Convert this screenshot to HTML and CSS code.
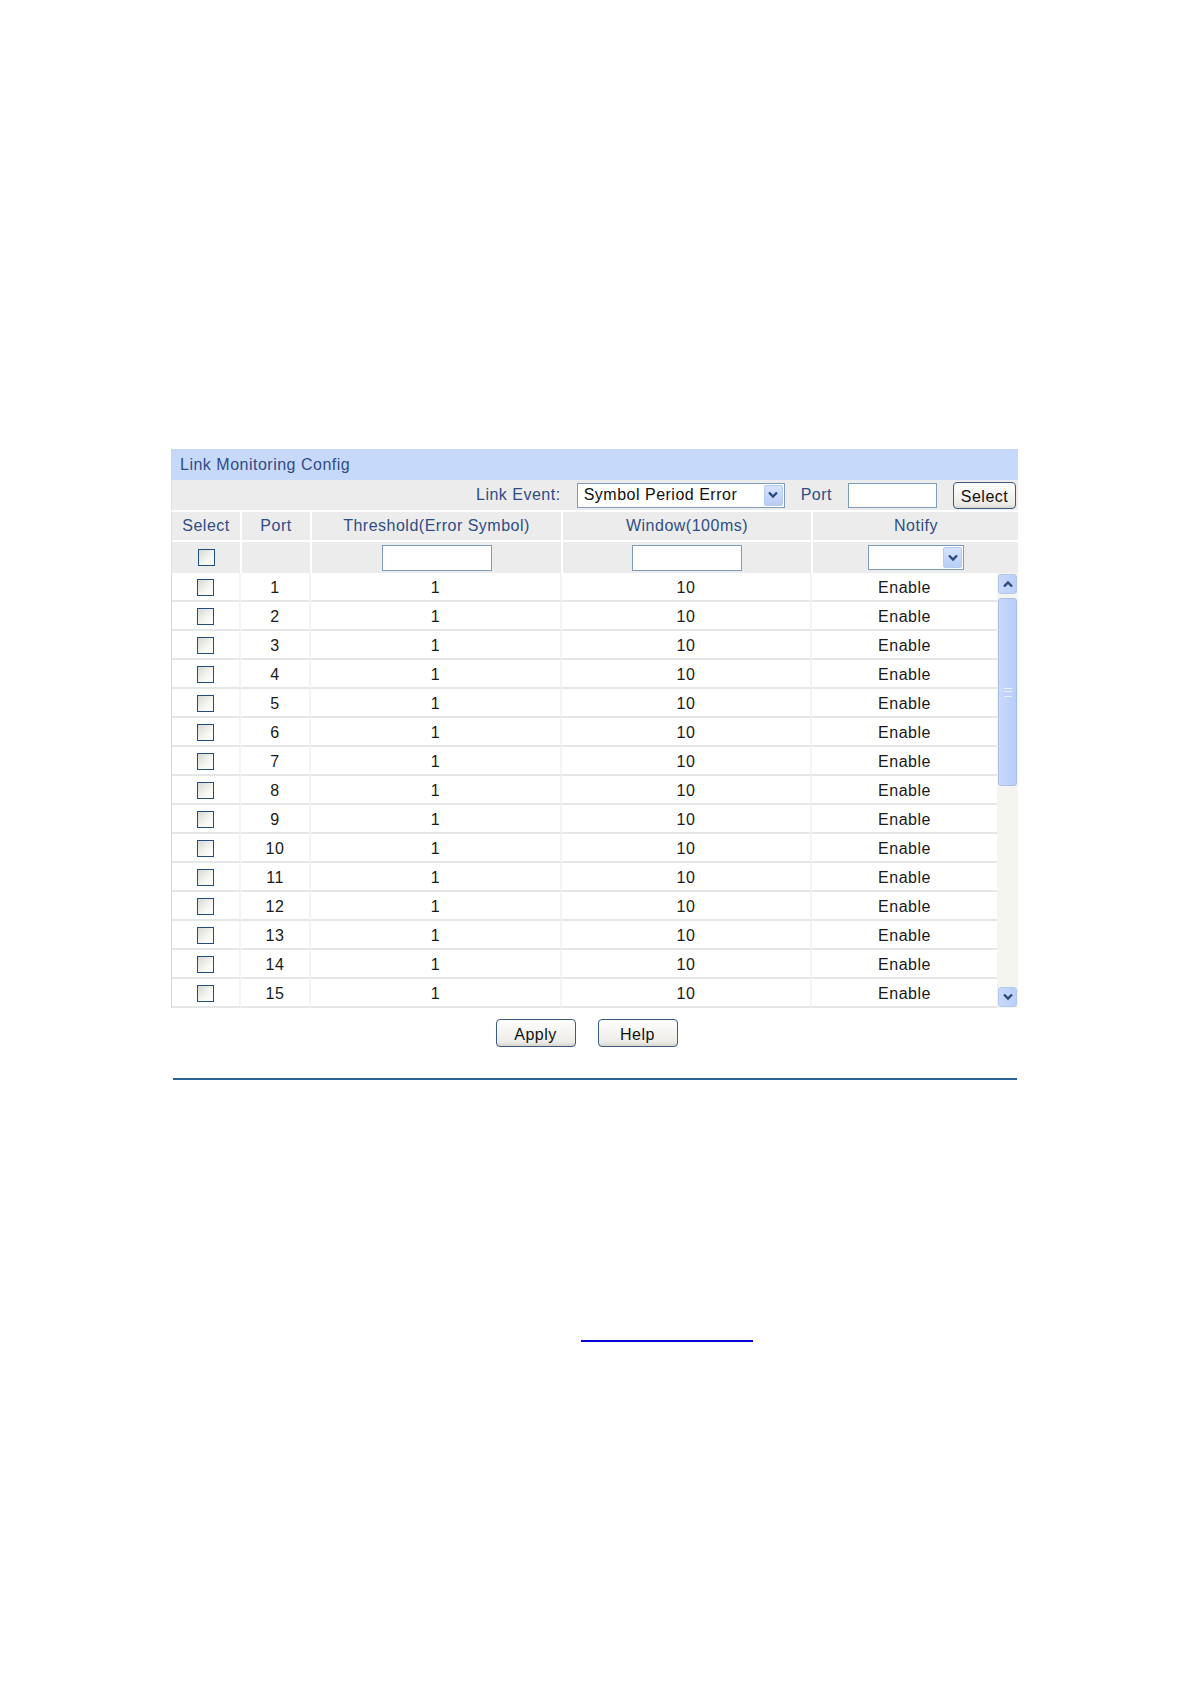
FILE: index.html
```html
<!DOCTYPE html>
<html>

<head>
    <meta charset="UTF-8">
    <title>Link Monitoring Config</title>
    <link rel="stylesheet" href="styles.css">
</head>

<body>
    <div class="page">
        <div id="panel">
            <div class="title-bar">Link Monitoring Config</div>

            <div class="event-bar">
                <span class="label">Link Event:</span>
                <div class="fake-select wide">
                    <span class="value">Symbol Period Error</span>
                    <span class="drop"><svg width="12" height="8" viewBox="0 0 12 8"><path d="M2 1.5 L6 5.5 L10 1.5" fill="none" stroke="#2b4a7c" stroke-width="2.4"/></svg></span>
                </div>
                <span class="label">Port</span>
                <input class="text-box port-box" type="text">
                <button class="btn select-btn">Select</button>
            </div>

            <div class="grid-row head">
                <div class="cell">Select</div>
                <div class="cell">Port</div>
                <div class="cell">Threshold(Error Symbol)</div>
                <div class="cell">Window(100ms)</div>
                <div class="cell">Notify</div>
            </div>

            <div class="grid-row filter">
                <div class="cell"><span class="check"></span></div>
                <div class="cell"></div>
                <div class="cell"><input class="text-box small-box" type="text"></div>
                <div class="cell"><input class="text-box small-box" type="text"></div>
                <div class="cell">
                    <div class="fake-select notify">
                        <span class="value"></span>
                        <span class="drop"><svg width="12" height="8" viewBox="0 0 12 8"><path d="M2 1.5 L6 5.5 L10 1.5" fill="none" stroke="#2b4a7c" stroke-width="2.4"/></svg></span>
                    </div>
                </div>
            </div>

            <div class="scroll-area">
                <div class="rows" id="rows"></div>
                <div class="scrollbar">
                    <div class="sb-btn"><svg width="12" height="8" viewBox="0 0 12 8"><path d="M2 6.5 L6 2.5 L10 6.5" fill="none" stroke="#2b4a7c" stroke-width="2.4"/></svg></div>
                    <div class="sb-thumb"><span class="grip"></span></div>
                    <div class="sb-track"></div>
                    <div class="sb-btn"><svg width="12" height="8" viewBox="0 0 12 8"><path d="M2 1.5 L6 5.5 L10 1.5" fill="none" stroke="#2b4a7c" stroke-width="2.4"/></svg></div>
                </div>
            </div>

            <div class="actions">
                <button class="btn action">Apply</button>
                <button class="btn action">Help</button>
            </div>
        </div>

        <hr class="rule">

        <div class="link-line"></div>
    </div>

    <script>
        // Monta as 15 linhas de portas
        const rows = document.getElementById('rows');
        for (let i = 1; i <= 15; i++) {
            const row = document.createElement('div');
            row.className = 'grid-row data';
            row.innerHTML =
                '<div class="cell"><span class="check"></span></div>' +
                '<div class="cell">' + i + '</div>' +
                '<div class="cell">1</div>' +
                '<div class="cell">10</div>' +
                '<div class="cell">Enable</div>';
            rows.appendChild(row);
        }
    </script>
</body>

</html>
```

FILE: styles.css
```css
body {
    margin: 0;
    background-color: #fff;
    font-family: "Liberation Sans", Arial, sans-serif;
}

.page {
    padding: 449px 0 0 171px;
}

#panel {
    width: 847px;
    font-size: 16px;
    letter-spacing: 0.5px;
}

.title-bar {
    height: 31px;
    line-height: 31px;
    padding-left: 9px;
    background-color: #c7d9fb;
    color: #2f4c86;
}

.event-bar {
    height: 32px;
    display: flex;
    align-items: center;
    justify-content: flex-end;
    padding-right: 2px;
    background-color: #ececec;
    border-left: 1px solid #e0e0e0;
    border-bottom: 2px solid #fff;
    box-sizing: border-box;
}

.event-bar .label {
    color: #2f4c86;
    margin-right: 16px;
}

.fake-select {
    display: flex;
    align-items: center;
    height: 25px;
    background-color: #fff;
    border: 1px solid #7f9db9;
    box-sizing: border-box;
}

.fake-select.wide {
    width: 208px;
    margin-right: 16px;
}

.fake-select.notify {
    width: 96px;
}

.fake-select .value {
    flex: 1;
    padding-left: 6px;
    color: #111;
    white-space: nowrap;
}

.fake-select .drop {
    width: 19px;
    height: 21px;
    margin-right: 1px;
    display: flex;
    align-items: center;
    justify-content: center;
    background: linear-gradient(#d6e3fd, #b7ccf7);
    border: 1px solid #b6c9ee;
    border-radius: 2px;
    box-sizing: border-box;
}

.text-box {
    height: 25px;
    border: 1px solid #7f9db9;
    background-color: #fff;
    box-sizing: border-box;
    padding: 0;
}

.port-box {
    width: 89px;
    margin-right: 16px;
}

.small-box {
    width: 110px;
    height: 26px;
}

.btn {
    font-family: "Liberation Sans", Arial, sans-serif;
    font-size: 16px;
    letter-spacing: 0.5px;
    color: #111;
    background: linear-gradient(#ffffff, #ecebe6 85%, #d8d5cc);
    border: 1px solid #3c5a82;
    border-radius: 4px;
    padding: 0;
    cursor: pointer;
}

.select-btn {
    width: 63px;
    height: 27px;
    padding-top: 3px;
}

.grid-row {
    display: grid;
    grid-template-columns: 70px 70px 251px 250px 206px;
}

.grid-row .cell {
    display: flex;
    align-items: center;
    justify-content: center;
}

.grid-row.head {
    height: 30px;
    background-color: #ececec;
    color: #2f4c86;
    border-left: 1px solid #e0e0e0;
    box-sizing: border-box;
}

.grid-row.head .cell,
.grid-row.filter .cell {
    border-right: 2px solid #fff;
    border-bottom: 2px solid #fff;
}

.grid-row.head .cell:last-child,
.grid-row.filter .cell:last-child {
    border-right: none;
}

.grid-row.filter {
    height: 31px;
    background-color: #ececec;
    border-left: 1px solid #e0e0e0;
    box-sizing: border-box;
}

.grid-row.filter .cell {
    border-bottom: none;
}

.check {
    width: 17px;
    height: 17px;
    border: 1px solid #1f4f7f;
    background: linear-gradient(135deg, #d9d8d2, #f6f6f3 60%, #ffffff);
    box-sizing: border-box;
    display: inline-block;
}

.scroll-area {
    display: flex;
    height: 435px;
    border-left: 1px solid #d8d8d8;
    box-sizing: border-box;
}

.rows {
    width: 825px;
}

.grid-row.data {
    grid-template-columns: 69px 70px 251px 250px 185px;
    height: 29px;
    color: #1a1a1a;
}

.grid-row.data .cell {
    border-bottom: 2px solid #e6e6e6;
    border-right: 2px solid #f4f4f4;
    padding-top: 2px;
}

.grid-row.data .cell:last-child {
    border-right: none;
}

.scrollbar {
    width: 21px;
    display: flex;
    flex-direction: column;
    background-color: #f4f4f0;
    padding: 1px;
    box-sizing: border-box;
}

.sb-btn {
    height: 20px;
    display: flex;
    align-items: center;
    justify-content: center;
    background: linear-gradient(90deg, #c9d9fd, #bacff8);
    border: 1px solid #b3c8ef;
    border-radius: 3px;
    box-sizing: border-box;
}

.sb-thumb {
    height: 188px;
    margin-top: 4px;
    display: flex;
    align-items: center;
    justify-content: center;
    background: linear-gradient(90deg, #c9d9fd, #b8cdf8);
    border: 1px solid #a9c0ee;
    border-radius: 3px;
    box-sizing: border-box;
}

.grip {
    width: 8px;
    height: 7px;
    border-top: 1px solid #e8efff;
    border-bottom: 1px solid #e8efff;
    background: linear-gradient(#c0d2f8 2px, #e8efff 2px, #e8efff 3px, #c0d2f8 3px);
}

.sb-track {
    flex: 1;
}

.actions {
    display: flex;
    justify-content: center;
    gap: 22px;
    padding: 11px 16px 0 0;
}

.btn.action {
    width: 80px;
    height: 28px;
    padding-top: 4px;
}

.rule {
    width: 844px;
    margin: 31px 0 0 2px;
    border: none;
    border-top: 2px solid #2a6497;
    height: 0;
}

.link-line {
    width: 172px;
    height: 2px;
    margin: 260px 0 0 410px;
    background-color: #0000d4;
}
```
